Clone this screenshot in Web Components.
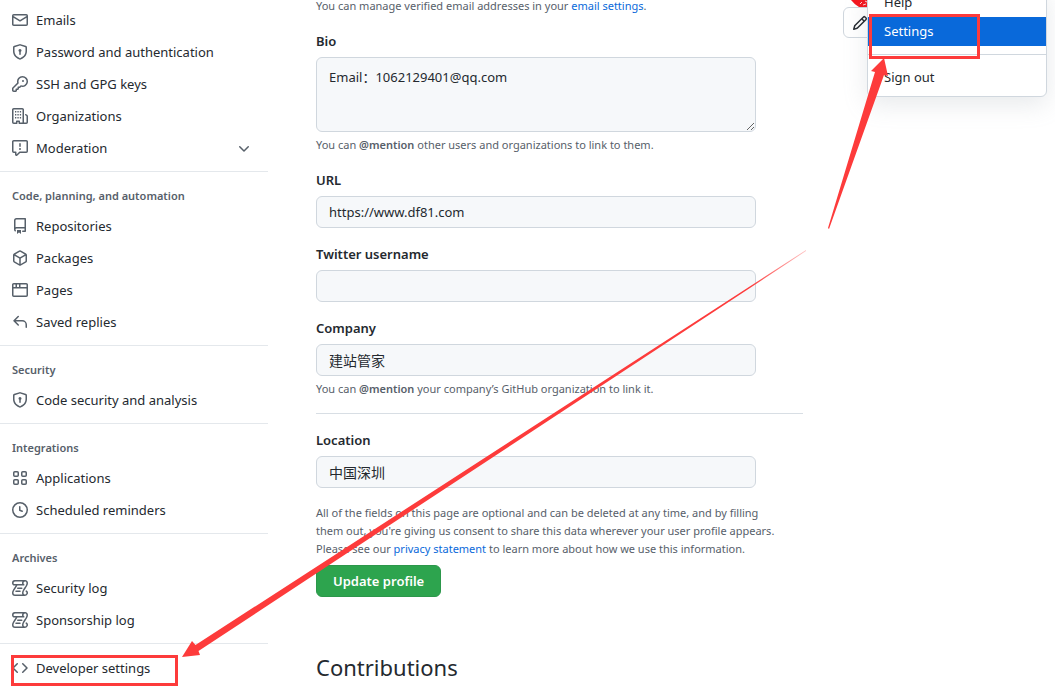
<!DOCTYPE html>
<html lang="en">
<head>
<meta charset="utf-8">
<title>Your profile</title>
<style>
  body {
    margin: 0;
    background: #fff;
    color: #24292f;
    font: 13px/20px "Noto Sans", "Noto Sans CJK SC", sans-serif;
  }
</style>
</head>
<body>
<settings-page></settings-page>
<script>
const ICONS = {
  mail: '<path d="M1.75 2A1.75 1.75 0 000 3.75v8.5C0 13.216.784 14 1.75 14h12.5A1.75 1.75 0 0016 12.25v-8.5A1.75 1.75 0 0014.25 2H1.75zM14.5 4.07v-.32a.25.25 0 00-.25-.25H1.75a.25.25 0 00-.25.25v.32L8 7.88l6.5-3.81zm-13 1.74v6.441c0 .138.112.25.25.25h12.5a.25.25 0 00.25-.25V5.809L8.38 9.397a.75.75 0 01-.76 0L1.5 5.809z"/>',
  shield: '<path d="M7.467.133a1.75 1.75 0 011.066 0l5.25 1.68A1.75 1.75 0 0115 3.48V7c0 1.566-.32 3.182-1.303 4.682-.983 1.498-2.585 2.813-5.032 3.855a1.7 1.7 0 01-1.33 0c-2.447-1.042-4.049-2.357-5.032-3.855C1.32 10.182 1 8.566 1 7V3.48a1.75 1.75 0 011.217-1.667l5.25-1.68zm.61 1.429a.25.25 0 00-.153 0l-5.25 1.68a.25.25 0 00-.174.238V7c0 1.358.275 2.666 1.057 3.86.784 1.194 2.121 2.34 4.366 3.297a.2.2 0 00.154 0c2.245-.956 3.582-2.104 4.366-3.298C13.225 9.666 13.5 8.36 13.5 7V3.48a.25.25 0 00-.174-.237l-5.25-1.68zM9.5 6.5a1.5 1.5 0 01-.75 1.3v2.45a.75.75 0 01-1.5 0V7.8A1.5 1.5 0 119.5 6.5z"/>',
  key: '<path d="M6.5 5.5a4 4 0 112.731 3.795.75.75 0 00-.768.18L7.44 10.5H6.25a.75.75 0 00-.75.75v1.19l-.06.06H4.25a.75.75 0 00-.75.75v1.19l-.06.06H1.75a.25.25 0 01-.25-.25v-1.69l5.024-5.023a.75.75 0 00.181-.768A3.995 3.995 0 016.5 5.5zm4-5.5a5.5 5.5 0 00-5.348 6.788L.22 11.72a.75.75 0 00-.22.53v2C0 15.216.784 16 1.75 16h2a.75.75 0 00.53-.22l.5-.5a.75.75 0 00.22-.53V14h.75a.75.75 0 00.53-.22l.5-.5a.75.75 0 00.22-.53V12h.75a.75.75 0 00.53-.22l.932-.932A5.5 5.5 0 1010.5 0zm.5 6a1 1 0 100-2 1 1 0 000 2z"/>',
  organization: '<path d="M1.5 14.25c0 .138.112.25.25.25H4v-1.25a.75.75 0 01.75-.75h2.5a.75.75 0 01.75.75v1.25h2.25a.25.25 0 00.25-.25V1.75a.25.25 0 00-.25-.25h-8.5a.25.25 0 00-.25.25v12.5zM1.75 16A1.75 1.75 0 010 14.25V1.75C0 .784.784 0 1.75 0h8.5C11.216 0 12 .784 12 1.75v12.5c0 .085-.006.168-.018.25h2.268a.25.25 0 00.25-.25V8.285a.25.25 0 00-.111-.208l-1.055-.703a.75.75 0 11.832-1.248l1.055.703c.487.325.779.871.779 1.456v5.965A1.75 1.75 0 0114.25 16h-3.5a.75.75 0 01-.197-.026c-.099.017-.2.026-.303.026h-3a.75.75 0 01-.75-.75V14h-1v1.25a.75.75 0 01-.75.75h-3z"/><path d="M3 3.1h1.3v1.3H3zM5.4 3.1h1.3v1.3H5.4zM7.8 3.1h1.3v1.3H7.8zM3 6.1h1.3v1.3H3zM5.4 6.1h1.3v1.3H5.4zM7.8 6.1h1.3v1.3H7.8zM3 9.1h1.3v1.3H3zM5.4 9.1h1.3v1.3H5.4zM7.8 9.1h1.3v1.3H7.8z"/>',
  report: '<path d="M0 1.75C0 .784.784 0 1.75 0h12.5C15.216 0 16 .784 16 1.75v9.5A1.75 1.75 0 0114.25 13H8.06l-2.573 2.573A1.457 1.457 0 013 14.543V13H1.75A1.75 1.75 0 010 11.25v-9.5zm1.75-.25a.25.25 0 00-.25.25v9.5c0 .138.112.25.25.25h2a.75.75 0 01.75.75v2.19l2.72-2.72a.75.75 0 01.53-.22h6.5a.25.25 0 00.25-.25v-9.5a.25.25 0 00-.25-.25H1.75zM9 9a1 1 0 11-2 0 1 1 0 012 0zm-.25-5.25a.75.75 0 00-1.5 0v2.5a.75.75 0 001.5 0v-2.5z"/>',
  chevron: '<path d="M12.78 6.22a.75.75 0 010 1.06l-4.25 4.25a.75.75 0 01-1.06 0L3.22 7.28a.75.75 0 011.06-1.06L8 9.94l3.72-3.72a.75.75 0 011.06 0z"/>',
  repo: '<path d="M2 2.5A2.5 2.5 0 014.5 0h8.75a.75.75 0 01.75.75v12.5a.75.75 0 01-.75.75h-2.5a.75.75 0 110-1.5h1.75v-2h-8a1 1 0 00-.714 1.7.75.75 0 01-1.072 1.05A2.495 2.495 0 012 11.5v-9zm10.5-1V9h-8c-.356 0-.694.074-1 .208V2.5a1 1 0 011-1h8zM5 12.25v3.25a.25.25 0 00.4.2l1.45-1.087a.25.25 0 01.3 0L8.6 15.7a.25.25 0 00.4-.2v-3.25a.25.25 0 00-.25-.25h-3.5a.25.25 0 00-.25.25z"/>',
  package: '<path d="M8.878.392a1.75 1.75 0 00-1.756 0l-5.25 3.045A1.75 1.75 0 001 4.951v6.098c0 .624.332 1.2.872 1.514l5.25 3.045a1.75 1.75 0 001.756 0l5.25-3.045c.54-.313.872-.89.872-1.514V4.951c0-.624-.332-1.2-.872-1.514L8.878.392zM7.875 1.69a.25.25 0 01.25 0l4.63 2.685L8 7.133 3.245 4.375l4.63-2.685zM2.5 5.677v5.372c0 .09.047.171.125.216l4.625 2.683V8.432L2.5 5.677zm6.25 8.271l4.625-2.683a.25.25 0 00.125-.216V5.677L8.75 8.432v5.516z"/>',
  browser: '<path d="M0 2.75C0 1.784.784 1 1.75 1h12.5c.966 0 1.75.784 1.75 1.75v10.5A1.75 1.75 0 0114.25 15H1.75A1.75 1.75 0 010 13.25V2.75zm1.75-.25a.25.25 0 00-.25.25V5h2V2.5H1.75zM5 2.5V5h2V2.5H5zm3.5 0V5h6V2.75a.25.25 0 00-.25-.25H8.5zm6 4h-13v6.75c0 .138.112.25.25.25h12.5a.25.25 0 00.25-.25V6.5z"/>',
  reply: '<path d="M6.78 1.97a.75.75 0 010 1.06L3.81 6h6.44A4.75 4.75 0 0115 10.75v2.5a.75.75 0 01-1.5 0v-2.5a3.25 3.25 0 00-3.25-3.25H3.81l2.97 2.97a.75.75 0 11-1.06 1.06L1.47 7.28a.75.75 0 010-1.06l4.25-4.25a.75.75 0 011.06 0z"/>',
  apps: '<g fill="none" stroke="currentColor" stroke-width="1.5"><rect x="1.75" y="1.75" width="4.5" height="4.5" rx="1"/><rect x="9.75" y="1.75" width="4.5" height="4.5" rx="1"/><rect x="1.75" y="9.75" width="4.5" height="4.5" rx="1"/><rect x="9.75" y="9.75" width="4.5" height="4.5" rx="1"/></g>',
  clock: '<path d="M1.5 8a6.5 6.5 0 1113 0 6.5 6.5 0 01-13 0zM8 0a8 8 0 100 16A8 8 0 008 0zm.5 4.75a.75.75 0 00-1.5 0v3.5a.75.75 0 00.471.696l2.5 1a.75.75 0 00.557-1.392L8.5 7.742V4.75z"/>',
  log: '<path d="M5 8.25a.75.75 0 01.75-.75h4a.75.75 0 010 1.5h-4A.75.75 0 015 8.25zM4 10.5A.75.75 0 004 12h4a.75.75 0 000-1.5H4z"/><path fill-rule="evenodd" d="M13-.005c1.654 0 3 1.328 3 3 0 .982-.338 1.933-.783 2.818-.443.879-1.028 1.758-1.582 2.588l-.011.017c-.568.853-1.104 1.659-1.501 2.446-.398.789-.623 1.494-.623 2.136a1.5 1.5 0 102.333-1.248.75.75 0 01.834-1.246A3 3 0 0113 16H3a3 3 0 01-3-3c0-1.582.891-3.135 1.777-4.506.209-.322.418-.637.623-.946.473-.709.923-1.386 1.287-2.048H2.51c-.576 0-1.381-.133-1.907-.783A2.68 2.68 0 010 2.995a3 3 0 013-3h10zm0 1.5a1.5 1.5 0 00-1.5 1.5c0 .476.223.834.667 1.132A.75.75 0 0111.75 5.5H5.368c-.467 1.003-1.141 2.015-1.773 2.963-.192.289-.381.571-.558.845C2.13 10.711 1.5 11.916 1.5 13A1.5 1.5 0 003 14.5h7.401A2.989 2.989 0 0110 13c0-.979.338-1.928.784-2.812.441-.874 1.023-1.748 1.575-2.576l.017-.026c.568-.853 1.103-1.658 1.501-2.448.398-.79.623-1.497.623-2.143 0-.838-.669-1.5-1.5-1.5zm-10 0a1.5 1.5 0 00-1.5 1.5c0 .321.1.569.27.778.097.12.325.227.74.227h7.674A2.737 2.737 0 0110 2.995c0-.546.146-1.059.401-1.5H3z"/>',
  code: '<path d="M4.72 3.22a.75.75 0 011.06 1.06L2.06 8l3.72 3.72a.75.75 0 11-1.06 1.06L.47 8.53a.75.75 0 010-1.06l4.25-4.25zm6.56 0a.75.75 0 10-1.06 1.06L13.94 8l-3.72 3.72a.75.75 0 101.06 1.06l4.25-4.25a.75.75 0 000-1.06l-4.25-4.25z"/>',
  pencil: '<path d="M11.013 1.427a1.75 1.75 0 012.474 0l1.086 1.086a1.75 1.75 0 010 2.474l-8.61 8.61c-.21.21-.47.364-.756.445l-3.251.93a.75.75 0 01-.927-.928l.929-3.25a1.75 1.75 0 01.445-.758l8.61-8.61zm1.414 1.06a.25.25 0 00-.354 0L10.811 3.75l1.439 1.44 1.263-1.263a.25.25 0 000-.354l-1.086-1.086zM11.189 6.25L9.75 4.81l-6.286 6.287a.25.25 0 00-.064.108l-.558 1.953 1.953-.558a.249.249 0 00.108-.064l6.286-6.286z"/>'
};

/* Base class: clones its markup into an open shadow root. */
class Base extends HTMLElement {
  connectedCallback() {
    if (this.shadowRoot) return;
    const t = document.createElement('template');
    t.innerHTML = this.render();
    this.attachShadow({ mode: 'open' }).append(t.content.cloneNode(true));
  }
}

customElements.define('oct-icon', class extends Base {
  render() {
    return `<style>:host{display:block;width:16px;height:16px;flex:none}svg{display:block}</style>
      <svg width="16" height="16" viewBox="0 0 16 16" fill="currentColor" fill-rule="evenodd" aria-hidden="true">${ICONS[this.getAttribute('name')]}</svg>`;
  }
});

customElements.define('nav-item', class extends Base {
  render() {
    const more = this.hasAttribute('expandable') ? '<oct-icon name="chevron"></oct-icon>' : '';
    return `<style>
        :host{display:block}
        a{display:flex;align-items:center;gap:8px;height:32px;padding:0 16px 0 12px;color:inherit;text-decoration:none}
        span{flex:1}
        oct-icon{color:#57606a}
      </style>
      <a href="#"><oct-icon name="${this.getAttribute('icon')}"></oct-icon><span><slot></slot></span>${more}</a>`;
  }
});

customElements.define('nav-group', class extends Base {
  render() {
    const h = this.getAttribute('heading');
    return `<style>
        :host{display:block;padding-bottom:7px}
        :host([divided]){border-top:1px solid #e4e8ec}
        :host([plain]){padding-top:8px}
        h2{margin:0;padding:15px 12px 5px;font-size:11px;line-height:18px;font-weight:600;color:#57606a}
      </style>
      ${h ? `<h2>${h}</h2>` : ''}<slot></slot>`;
  }
});

customElements.define('form-field', class extends Base {
  render() {
    const v = this.getAttribute('value') || '';
    const control = this.hasAttribute('multiline')
      ? `<textarea id="c">${v}</textarea>` : `<input id="c" type="text" value="${v}">`;
    return `<style>
        :host{display:block;margin-bottom:16px}
        label{display:block;margin-bottom:6px;font-weight:600}
        input,textarea{display:block;box-sizing:border-box;width:100%;max-width:440px;height:32px;margin:0;padding:5px 12px;
          border:1px solid #d0d7de;border-radius:6px;background:#f6f8fa;color:inherit;font:inherit;outline:0}
        textarea{height:75px;padding:9px 12px;resize:vertical}
        :host([lang="zh"]) input{font-size:14px}
        ::slotted(*){margin-top:4px}
      </style>
      <label for="c">${this.getAttribute('label')}</label>${control}<slot></slot>`;
  }
});

customElements.define('help-text', class extends Base {
  render() {
    return `<style>
        :host{display:block;max-width:472px;font-size:11px;line-height:18px;color:#57606a}
        ::slotted(a){color:#0969da;text-decoration:none}
        ::slotted(strong){font-weight:600}
      </style><slot></slot>`;
  }
});

customElements.define('primary-button', class extends Base {
  render() {
    return `<style>
        :host{display:block}
        button{height:32px;padding:0 16px;border:1px solid #2c974b;border-radius:6px;background:#2da44e;color:#fff;
          font:600 13px/20px "Noto Sans",sans-serif}
      </style><button type="button"><slot></slot></button>`;
  }
});

customElements.define('profile-picture', class extends Base {
  render() {
    return `<style>
        :host{display:block;position:relative}
        svg{display:block;margin-left:8px}
        button{display:flex;align-items:center;height:31px;width:64px;padding:0 8px;border:1px solid #d0d7de;border-radius:6px;background:#fff;color:#24292f}
      </style>
      <svg width="24" height="7" viewBox="0 0 24 7" aria-hidden="true"><path fill="#f5141d" d="M0 0h24v7H8Q3 4 0 0z"/><path stroke="#fff" stroke-width=".8" d="M9 4l2-2M12 5l3-1M14 1l2 1"/></svg>
      <button type="button" aria-label="Edit picture"><oct-icon name="pencil"></oct-icon></button>`;
  }
});

customElements.define('user-menu', class extends Base {
  render() {
    return `<style>
        :host{display:block;box-sizing:border-box;width:180px;padding:0 0 4px;border:1px solid #d0d7de;border-radius:6px;
          background:#fff;box-shadow:0 8px 24px rgba(140,149,159,.2)}
        a{display:block;height:29px;padding:0 16px;line-height:29px;color:inherit;text-decoration:none}
        a.on{background:#0969da;color:#fff}
        hr{margin:8px 0;border:0;border-top:1px solid #d0d7de}
      </style>
      <a href="#">Help</a><a class="on" href="#">Settings</a><hr><a href="#">Sign out</a>`;
  }
});

/* Hand-drawn marks laid over the page. */
customElements.define('mark-layer', class extends Base {
  render() {
    return `<style>:host{display:block;pointer-events:none}svg{display:block}</style>
      <svg width="1055" height="688" viewBox="0 0 1055 688" aria-hidden="true">
        <defs><linearGradient id="g" gradientUnits="userSpaceOnUse" x1="806" y1="250" x2="750" y2="287">
          <stop offset="0" stop-color="#fd3b3b" stop-opacity=".3"/><stop offset="1" stop-color="#fd3b3b"/></linearGradient></defs>
        <g fill="none" stroke="#fd3b3b" stroke-width="3">
          <rect x="870.5" y="15.5" width="108" height="42"/><rect x="12.500" y="656.5" width="164" height="28"/>
        </g>
        <path fill="#fd3b3b" d="M884 58L871 71 875 72 828 228 829 229 884 75 888 76z"/>
        <path fill="url(#g)" d="M806 250L195.500 645 192 641 182 657 200 655 198.500 651 806 251z"/>
      </svg>`;
  }
});

customElements.define('settings-page', class extends Base {
  render() {
    return `<style>
        :host{display:block;position:relative;overflow:hidden;min-height:100vh}
        .page{display:flex}
        nav{width:268px;flex:none;padding-top:4px}
        main{flex:1;min-width:0;margin:-3px 40px 0 48px}
        aside{width:212px;flex:none}
        .first{margin-bottom:16px}
        hr{margin:-1px 0 16px;border:0;border-top:1px solid #d8dee4}
        primary-button{margin:7px 0 52px}
        h2{margin:0;font-size:22px;line-height:36px;font-weight:400}
        user-menu{position:absolute;top:-13px;right:8px}
        mark-layer{position:absolute;top:0;left:0}
      </style>
      <div class="page">
        <nav aria-label="Settings">
          <nav-group>
            <nav-item icon="mail">Emails</nav-item>
            <nav-item icon="shield">Password and authentication</nav-item>
            <nav-item icon="key">SSH and GPG keys</nav-item>
            <nav-item icon="organization">Organizations</nav-item>
            <nav-item icon="report" expandable>Moderation</nav-item>
          </nav-group>
          <nav-group divided heading="Code, planning, and automation">
            <nav-item icon="repo">Repositories</nav-item>
            <nav-item icon="package">Packages</nav-item>
            <nav-item icon="browser">Pages</nav-item>
            <nav-item icon="reply">Saved replies</nav-item>
          </nav-group>
          <nav-group divided heading="Security">
            <nav-item icon="shield">Code security and analysis</nav-item>
          </nav-group>
          <nav-group divided heading="Integrations">
            <nav-item icon="apps">Applications</nav-item>
            <nav-item icon="clock">Scheduled reminders</nav-item>
          </nav-group>
          <nav-group divided heading="Archives">
            <nav-item icon="log">Security log</nav-item>
            <nav-item icon="log">Sponsorship log</nav-item>
          </nav-group>
          <nav-group divided plain>
            <nav-item icon="code">Developer settings</nav-item>
          </nav-group>
        </nav>
        <main>
          <help-text class="first">You can manage verified email addresses in your <a href="#">email settings</a>.</help-text>
          <form-field label="Bio" multiline value="Email：1062129401@qq.com">
            <help-text>You can <strong>@mention</strong> other users and organizations to link to them.</help-text>
          </form-field>
          <form-field label="URL" value="https://www.df81.com"></form-field>
          <form-field label="Twitter username"></form-field>
          <form-field label="Company" lang="zh" value="建站管家">
            <help-text>You can <strong>@mention</strong> your company’s GitHub organization to link it.</help-text>
          </form-field>
          <hr>
          <form-field label="Location" lang="zh" value="中国深圳"></form-field>
          <help-text>All of the fields on this page are optional and can be deleted at any time, and by filling them out, you're giving us consent to share this data wherever your user profile appears. Please see our <a href="#">privacy statement</a> to learn more about how we use this information.</help-text>
          <primary-button>Update profile</primary-button>
          <h2>Contributions</h2>
        </main>
        <aside><profile-picture></profile-picture></aside>
      </div>
      <user-menu></user-menu>
      <mark-layer></mark-layer>`;
  }
});
</script>
</body>
</html>
